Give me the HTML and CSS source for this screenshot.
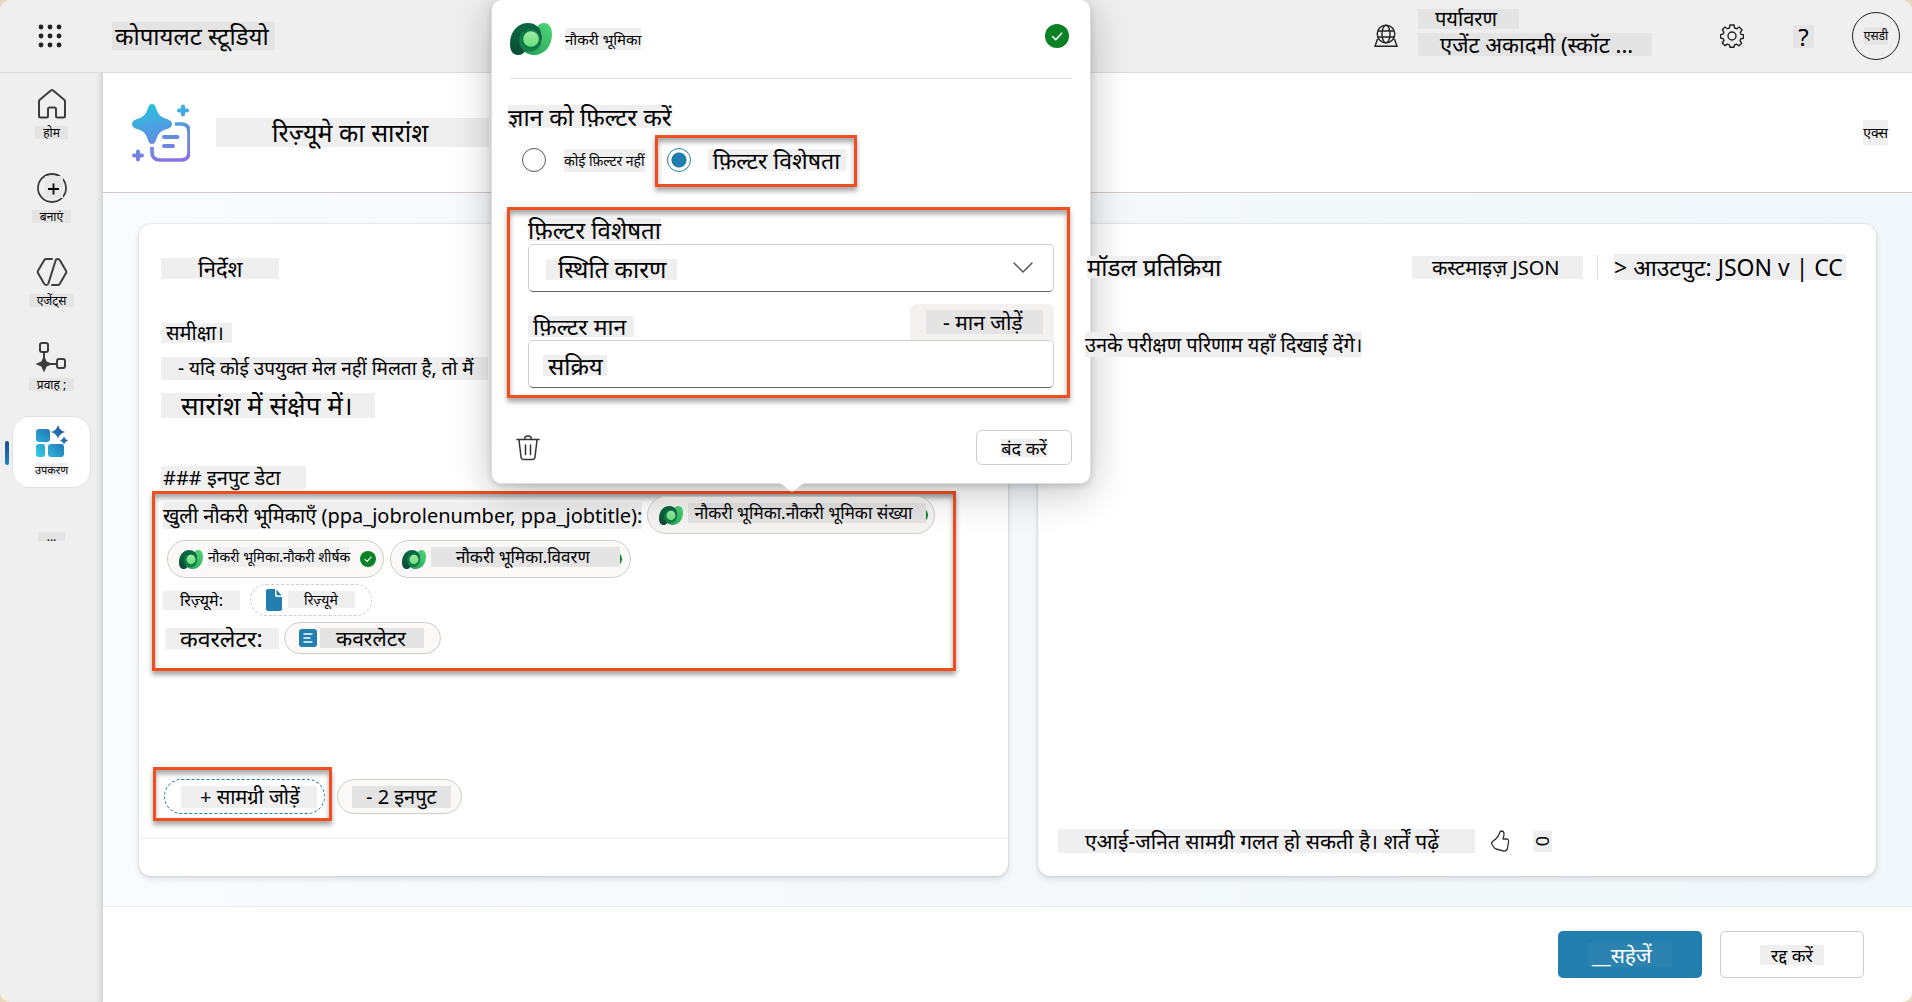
FILE: index.html
```html
<!DOCTYPE html>
<html lang="hi">
<head>
<meta charset="utf-8">
<title>कोपायलट स्टूडियो</title>
<meta name="viewport" content="width=device-width, initial-scale=1">
<link rel="stylesheet" href="styles.css">
</head>
<body>
<svg class="defs" width="0" height="0" aria-hidden="true">
  <defs>
    <linearGradient id="dvDark" x1="0" y1="0" x2="0" y2="1"><stop offset="0" stop-color="#0b6b43"/><stop offset="1" stop-color="#0a4a33"/></linearGradient>
    <linearGradient id="dvLight" x1="1" y1="0" x2="0" y2="1"><stop offset="0" stop-color="#4fd876"/><stop offset="1" stop-color="#1f9a54"/></linearGradient>
    <linearGradient id="dvCore" x1="0" y1="0" x2="0" y2="1"><stop offset="0" stop-color="#9ce8a3"/><stop offset="1" stop-color="#6be37c"/></linearGradient>
    <symbol id="dataverse" viewBox="0 0 42 32" preserveAspectRatio="none">
      <path d="M24 32C34 32 42 24 42 11c0-7-3-11-8-11-3 0-5 1-7 4 4 3 6 8 5 13-1 6-6 9-11 9-5 0-9-3-10-8-1 9 5 14 13 14z" fill="url(#dvLight)"/>
      <path d="M18 0C8 0 0 8 0 21c0 7 3 11 8 11 3 0 5-1 7-4L21 16l11 1C33 7 27 0 18 0z" fill="url(#dvDark)"/>
      <path d="M12 9C8 15 8 22 14 28c9 3 18-2 18-13z" fill="#14804a"/>
      <circle cx="21" cy="16" r="10" fill="#107845"/>
      <circle cx="21" cy="16" r="7.800" fill="url(#dvCore)"/>
    </symbol>
    <symbol id="check" viewBox="0 0 24 24">
      <circle cx="12" cy="12" r="12" fill="#0b8126"/>
      <path d="M7.500 12.500l3.200 3.200 6-6.500" fill="none" stroke="#fff" stroke-width="1.600" stroke-linecap="round" stroke-linejoin="round"/>
    </symbol>
    <linearGradient id="toolG" gradientUnits="userSpaceOnUse" x1="0" y1="32" x2="28" y2="2"><stop offset="0" stop-color="#33cfe2"/><stop offset=".6" stop-color="#2585c0"/><stop offset="1" stop-color="#24509e"/></linearGradient>
    <linearGradient id="promptG" gradientUnits="userSpaceOnUse" x1="20" y1="0" x2="34" y2="58"><stop offset="0" stop-color="#2bc0dc"/><stop offset=".5" stop-color="#5597e2"/><stop offset="1" stop-color="#8a72e8"/></linearGradient>
  </defs>
</svg>

<div class="app">
  <header class="topbar">
    <button class="icon-btn waffle" aria-label="ऐप लॉन्चर">
      <svg width="24" height="24" viewBox="0 0 24 24" fill="#222"><circle cx="3" cy="3" r="2.400"/><circle cx="12" cy="3" r="2.400"/><circle cx="21" cy="3" r="2.400"/><circle cx="3" cy="12" r="2.400"/><circle cx="12" cy="12" r="2.400"/><circle cx="21" cy="12" r="2.400"/><circle cx="3" cy="21" r="2.400"/><circle cx="12" cy="21" r="2.400"/><circle cx="21" cy="21" r="2.400"/></svg>
    </button>
    <a class="brand tag dark" href="#">कोपायलट स्टूडियो</a>
    <div class="env">
      <svg width="24" height="24" viewBox="0 0 24 24" fill="none" stroke="#222" stroke-width="1.400"><circle cx="12" cy="10" r="8.800"/><ellipse cx="12" cy="10" rx="4" ry="8.800"/><path d="M4 7h16M4 13h16M3.500 15L1 22.300h22L20.500 15"/></svg>
      <div class="env-text">
        <span class="env-label tag dark">पर्यावरण</span>
        <span class="env-name tag dark">एजेंट अकादमी (स्कॉट ...</span>
      </div>
    </div>
    <button class="icon-btn gear" aria-label="सेटिंग">
      <svg width="24" height="24" viewBox="0 0 24 24" fill="none" stroke="#222" stroke-width="1.400" stroke-linejoin="round"><path d="M10 1h4l.6 3 2 .9L19.200 3 22 5.800l-1.700 2.600.8 2 2.400.4v3.400l-2.700.6-.8 1.900 1.600 2.500-2.600 2.600-2.500-1.600-2 .8L14 23.200h-4l-.6-2.300-2-.8L5 21.700 2.300 19l1.600-2.500-.8-1.900-2.600-.6v-3.400l2.500-.5.9-2L2.300 5.800 5 3l2.400 1.700L9.400 4z"/><circle cx="12" cy="12" r="4"/></svg>
    </button>
    <button class="icon-btn help tag dark">?</button>
    <button class="avatar"><span class="tag dark">एसडी</span></button>
  </header>

  <div class="body">
    <nav class="rail">
      <a class="rail-item" href="#">
        <svg width="32" height="32" viewBox="0 0 32 32" fill="none" stroke="#3d3d3d" stroke-width="2" stroke-linejoin="round"><path d="M14.800 2.600L3.800 11.800Q3 12.500 3 13.500V28q0 1.500 1.500 1.500h6Q12 29.500 12 28v-7q0-1.500 1.500-1.500h5Q20 19.500 20 21v7q0 1.500 1.500 1.500h6q1.500 0 1.500-1.500V13.500q0-1-.8-1.700L17.200 2.600q-1.200-1-2.400 0z"/></svg>
        <span class="tag dark">होम</span>
      </a>
      <a class="rail-item" href="#">
        <svg width="32" height="32" viewBox="0 0 32 32" fill="none" stroke="#3d3d3d" stroke-width="1.800"><circle cx="16" cy="16" r="14"/><rect x="9" y="4" width="18" height="22" fill="#e6e6e6" stroke="none"/><path d="M17.500 11.500v11M12 17h11" stroke="#000"/></svg>
        <span class="tag dark">बनाएं</span>
      </a>
      <a class="rail-item" href="#">
        <svg width="32" height="32" viewBox="0 0 32 32" fill="none" stroke="#3d3d3d" stroke-width="2" stroke-linejoin="round" stroke-linecap="round"><path d="M16 3H10.500Q9 3 8.300 4L2 14.700q-.7 1.200 0 2.400L8 27.500q.6 1.500 2.200 1.500 1.600 0 2.200-1.500L19.600 4.500Q20 3 21.600 3q1.600 0 2.400 1.500L30 14.700q.7 1.200 0 2.400L23.700 28q-.6 1-2 1H16"/></svg>
        <span class="tag dark">एजेंट्स</span>
      </a>
      <a class="rail-item" href="#">
        <svg width="32" height="32" viewBox="0 0 32 32" fill="none" stroke="#3d3d3d" stroke-width="2"><rect x="4" y="3" width="8" height="9" rx="2"/><rect x="21" y="19" width="8" height="9" rx="2"/><path d="M8 12v6M14 24h7"/><path d="M8 18l1.800 4.200L14 24l-4.200 1.800L8 30l-1.800-4.200L2 24l4.200-1.800z" fill="#3d3d3d"/></svg>
        <span class="tag dark">प्रवाह ;</span>
      </a>
      <a class="rail-item active" href="#">
        <svg width="32" height="32" viewBox="0 0 32 32" fill="url(#toolG)"><rect x="0" y="4" width="14" height="13" rx="3"/><rect x="0" y="19" width="9" height="13" rx="3"/><rect x="12" y="19" width="16" height="13" rx="3"/><path d="M22 0q1.500 5.500 7 7-5.500 1.500-7 7-1.500-5.500-7-7 5.500-1.500 7-7zM28 11.500q1 3 4 4-3 1-4 4-1-3-4-4 3-1 4-4z"/></svg>
        <span class="tag">उपकरण</span>
      </a>
      <a class="rail-item more" href="#"><span class="tag dark">...</span></a>
    </nav>

    <main class="main">
      <section class="titlebar">
        <svg width="58" height="58" viewBox="0 0 58 58" fill="url(#promptG)"><path d="M20 0q3 0 4 4c2 6 4 9 11 11q5 1.500 5 5t-5 5c-7 2-9 5-11 11q-1 4-4 4t-4-4c-2-6-4-9-11-11q-5-1.500-5-5t5-5c7-2 9-5 11-11q1-4 4-4z"/><path d="M43 20h6q8 0 8 8v20q0 8-8 8H28q-8 0-8-8v-5" fill="none" stroke="url(#promptG)" stroke-width="3.600"/><path d="M32 33h13.500M32 42h9" fill="none" stroke="url(#promptG)" stroke-width="4" stroke-linecap="round"/><path d="M51 2.500v8M47 6.500h8M6 47.500v8M2 51.500h8" stroke="url(#promptG)" stroke-width="4" stroke-linecap="round"/></svg>
        <h1 class="tag">रिज़्यूमे का सारांश</h1>
        <button class="close tag">एक्स</button>
      </section>

      <section class="workspace">
        <article class="card prompt">
          <div class="prompt-body">
            <h2 class="tag">निर्देश</h2>
            <p class="line-a tag">समीक्षा।</p>
            <p class="line-b tag">- यदि कोई उपयुक्त मेल नहीं मिलता है, तो मैं</p>
            <p class="line-c tag">सारांश में संक्षेप में।</p>
            <p class="line-d tag">### इनपुट डेटा</p>
            <div class="inputs marked">
              <div class="row">
                <span class="roles tag">खुली नौकरी भूमिकाएँ (ppa_jobrolenumber, ppa_jobtitle):</span>
                <button class="chip c1"><svg class="dv"><use href="#dataverse"/></svg><span class="tag dark">नौकरी भूमिका.नौकरी भूमिका संख्या</span><svg class="sliver" viewBox="14 0 2 16"><circle cx="8" cy="8" r="8" fill="#0b8126"/></svg></button>
              </div>
              <div class="row second">
                <button class="chip c2"><svg class="dv"><use href="#dataverse"/></svg><span class="tag">नौकरी भूमिका.नौकरी शीर्षक</span><svg class="ok"><use href="#check"/></svg></button>
                <button class="chip c3"><svg class="dv"><use href="#dataverse"/></svg><span class="tag dark">नौकरी भूमिका.विवरण</span><svg class="sliver" viewBox="14 0 2 16"><circle cx="8" cy="8" r="8" fill="#0b8126"/></svg></button>
              </div>
              <div class="row third">
                <span class="resume tag">रिज़्यूमे:</span>
                <button class="chip c4"><svg width="16" height="22" viewBox="0 0 16 22" fill="#217ead"><path d="M2 0h7v6q0 2 2 2h5v12q0 2-2 2H2q-2 0-2-2V2q0-2 2-2z"/><path d="M10.500.5L15.500 6.500H12q-1.500 0-1.500-1.500z"/></svg><span class="tag">रिज़्यूमे</span></button>
              </div>
              <div class="row fourth">
                <span class="cover tag">कवरलेटर:</span>
                <button class="chip c5"><svg width="18" height="18" viewBox="0 0 18 18"><rect width="18" height="18" rx="3" fill="#217ead"/><path d="M5 5h8M5 9h6M5 13h8" stroke="#fff" stroke-width="1.300" stroke-linecap="round"/></svg><span class="tag dark">कवरलेटर</span></button>
              </div>
            </div>
          </div>
          <div class="actions">
            <div class="marked add-mark"><button class="pill add"><span class="tag">+ सामग्री जोड़ें</span></button></div>
            <button class="pill count"><span class="tag dark">- 2 इनपुट</span></button>
          </div>
          <div class="card-foot"></div>
        </article>

        <article class="card response">
          <div class="response-head">
            <h2 class="tag">मॉडल प्रतिक्रिया</h2>
            <button class="custom tag">कस्टमाइज़ JSON</button>
            <span class="rule"></span>
            <button class="output tag">&gt; आउटपुट: JSON v | CC</button>
          </div>
          <p class="hint tag">उनके परीक्षण परिणाम यहाँ दिखाई देंगे।</p>
          <div class="response-foot">
            <p class="terms tag">एआई-जनित सामग्री गलत हो सकती है। शर्तें पढ़ें</p>
            <button class="icon-btn" aria-label="पसंद"><svg width="20" height="24" viewBox="0 0 20 24" fill="none" stroke="#333" stroke-width="1.300" stroke-linejoin="round"><path d="M11.500 2q2.500 0 2.500 3 0 2-1 5h3.500q2.500 0 2 3l-1 6.500q-.8 3-4 2.500L6 20q-1.500-.5-2.300-2L2 15.500q-1-2 .8-3.200 5-3 6.700-8.300.6-2 2-2z"/></svg></button>
            <button class="dislike tag">0</button>
          </div>
        </article>
      </section>

      <footer class="footer">
        <button class="save"><span class="tag">__सहेजें</span></button>
        <button class="cancel"><span class="tag">रद्द करें</span></button>
      </footer>
    </main>
  </div>
</div>

<section class="popup" role="dialog" aria-label="नौकरी भूमिका">
  <header class="popup-head">
    <svg class="logo"><use href="#dataverse"/></svg>
    <span class="name tag">नौकरी भूमिका</span>
    <svg class="status"><use href="#check"/></svg>
  </header>
  <fieldset class="choice">
    <legend class="tag">ज्ञान को फ़िल्टर करें</legend>
    <div class="radios">
      <label class="no-filter"><input type="radio" name="f"><span class="tag">कोई फ़िल्टर नहीं</span></label>
      <label class="by-attr marked"><input type="radio" name="f" checked><span class="tag">फ़िल्टर विशेषता</span></label>
    </div>
  </fieldset>
  <div class="filter marked">
    <label class="f1 tag" for="attr">फ़िल्टर विशेषता</label>
    <div class="select-wrap">
      <select id="attr"><option>स्थिति कारण</option></select>
      <svg width="20" height="12" viewBox="0 0 20 12" fill="none" stroke="#555" stroke-width="1.500" stroke-linecap="round" stroke-linejoin="round"><path d="M1 1l9 9 9-9"/></svg>
    </div>
    <div class="value-head">
      <label class="f2 tag" for="val">फ़िल्टर मान</label>
      <button class="add-value"><span class="tag dark">- मान जोड़ें</span></button>
    </div>
    <input id="val" type="text" value="सक्रिय">
  </div>
  <div class="popup-foot">
    <button class="icon-btn" aria-label="हटाएँ"><svg width="24" height="26" viewBox="0 0 24 26" fill="none" stroke="#333" stroke-width="1.500" stroke-linecap="round"><path d="M1 4.500h22M8.500 4.500Q8.500 1 12 1t3.500 3.500M3 5l2 17q.3 2.500 2.800 2.500h8.400q2.500 0 2.800-2.500L21 5M9.500 10v9.500M14.500 10v9.500"/></svg></button>
    <button class="dismiss"><span class="tag">बंद करें</span></button>
  </div>
</section>
</body>
</html>
```
FILE: styles.css
```css
* { box-sizing: border-box; }
html { height: 100%; background: #e6dcbc; }
body {
  margin: 0;
  min-height: 100%;
  color: #000;
  font: 20px/24px "Noto Sans", "Noto Sans Devanagari", sans-serif;
}
h1, h2, p, fieldset, legend { margin: 0; padding: 0; border: 0; font-weight: 400; }
a { color: inherit; text-decoration: none; }
svg { display: block; flex: none; }
.defs { position: absolute; }
button, input, select { font: inherit; color: inherit; margin: 0; }
button { padding: 0; border: 0; background: none; cursor: pointer; }

/* shaded text run */
.tag { display: block; background: #efefef; white-space: nowrap; flex: none; text-align: left; }
.tag.dark { background: #e4e4e4; }

/* orange callout frame */
.marked {
  border: 3px solid #f04e1e;
  box-shadow: 0 4px 5px rgba(0, 0, 0, .35), inset 0 4px 5px rgba(0, 0, 0, .35);
}

.app { display: flex; flex-direction: column; min-height: 100vh; background: #efefef; border-radius: 10px; overflow: hidden; }

.topbar { display: flex; align-items: center; height: 73px; padding: 0 12px 0 38px; border-bottom: 1px solid #dcdcdc; }
.brand { margin-left: 50px; padding: 0 6px 0 3px; font-size: 24px; line-height: 28px; }
.env { display: flex; align-items: center; gap: 20px; margin-left: auto; }
.env-text { display: flex; flex-direction: column; gap: 4px; width: 234px; padding-bottom: 7px; }
.env-label { width: 101px; padding-left: 17px; line-height: 20px; }
.env-name { padding-left: 22px; font-size: 22px; line-height: 23px; }
.gear { margin-left: 68px; }
.help.tag { margin-left: 49px; width: 21px; font-size: 24px; line-height: 23px; text-align: center; }
.avatar { display: grid; place-items: center; width: 48px; height: 48px; margin-left: 38px; border: 1px solid #222; border-radius: 50%; }
.avatar .tag { font-size: 12px; line-height: 18px; }

.body { display: flex; flex: 1; }
.rail { display: flex; flex-direction: column; align-items: center; gap: 6px; width: 103px; padding: 7px 0 0; box-shadow: inset -6px 0 6px -4px rgba(0, 0, 0, .15); }
.rail-item { display: flex; flex-direction: column; align-items: center; gap: 6px; width: 79px; height: 78px; padding-top: 8px; border-radius: 18px; font-size: 12px; line-height: 13px; }
.rail-item .tag { padding: 0 8px; }
.rail-item.active { position: relative; height: 72px; background: #fff; border: 1px solid #e2e2e2; }
.rail-item.active .tag { padding: 0; font-size: 11px; }
.rail-item.active::before { content: ""; position: absolute; left: -8px; top: 24px; width: 4px; height: 24px; border-radius: 2px; background: linear-gradient(#1c4a94, #2283bd); }
.rail-item.more { height: 60px; padding-top: 38px; }
.rail-item.more .tag { padding: 0 9px; line-height: 9px; }

.main { display: flex; flex-direction: column; flex: 1; min-width: 0; background: #fff; }
.titlebar { display: flex; align-items: center; height: 120px; padding: 0 24px 0 29px; border-bottom: 1px solid #cfcac7; }
.titlebar h1 { margin-left: 26px; width: 273px; padding-left: 56px; font-size: 25px; line-height: 29px; }
.close.tag { margin-left: auto; font-size: 14px; line-height: 25px; }

.workspace { display: flex; flex: 1; gap: 30px; padding: 31px 36px 30px; background: linear-gradient(90deg, #f9fbfe, #f1f7fa); }
.card { display: flex; flex-direction: column; min-width: 0; background: #fff; border-radius: 12px; box-shadow: 0 0 2px rgba(0, 0, 0, .2), 0 3px 6px rgba(0, 0, 0, .12); }
.prompt { flex: 869 1 0; }
.response { flex: 838 1 0; }

.prompt-body { display: flex; flex-direction: column; align-items: flex-start; flex: 1; padding: 34px 13px 0; }
.prompt-body > .tag { margin-left: 9px; }
.prompt h2 { width: 118px; padding-left: 37px; font-size: 22px; line-height: 21px; }
.line-a { margin-top: 44px; padding: 0 8px 0 5px; line-height: 20px; }
.line-b { margin-top: 14px; padding: 0 14px 0 17px; font-size: 19px; line-height: 23px; }
.line-c { margin-top: 13px; padding: 0 22px 0 20px; font-size: 26px; line-height: 25px; }
.line-d { margin-top: 48px; padding: 0 26px 0 2px; line-height: 23px; }
.inputs { width: 804px; height: 180px; margin-top: 2px; padding: 2px 8px 0; }
.row { display: flex; align-items: center; gap: 5px; }
.row.second { margin-top: 6px; padding-left: 4px; gap: 6px; }
.row.third { margin-top: 6px; gap: 10px; }
.row.fourth { margin-top: 6px; padding-left: 2px; }
.roles { line-height: 27px; }
.resume { width: 77px; padding-left: 17px; font-size: 16px; line-height: 19px; }
.cover { width: 114px; padding-left: 15px; font-size: 23px; line-height: 21px; }

.chip { display: flex; align-items: center; height: 38px; border: 1px solid #cfcdcb; border-radius: 19px; background: #faf9f8; font-size: 17px; line-height: 20px; }
.chip .dv { width: 24px; height: 19px; margin-right: 5px; }
.chip .ok { width: 16px; height: 16px; margin-left: 11px; }
.chip .tag { margin-bottom: 4px; }
.sliver { width: 2px; height: 16px; }
.c1 { width: 288px; padding-left: 11px; background: #f5f4f3; }
.c1 .tag { width: 238px; padding-left: 6px; }
.c2 { width: 217px; padding-left: 11px; }
.c2 .tag { width: 141px; font-size: 14px; }
.c3 { width: 241px; padding-left: 11px; }
.c3 .tag { width: 189px; padding-left: 25px; }
.c4 { width: 122px; height: 32px; padding-left: 15px; gap: 6px; border-style: dashed; background: #fff; font-size: 14px; line-height: 17px; }
.c4 .tag { width: 67px; padding-left: 16px; margin-bottom: 2px; }
.c5 { width: 157px; height: 32px; padding-left: 14px; gap: 3px; font-size: 21px; }
.c5 .tag { width: 104px; padding-left: 16px; margin: 0; }

.actions { display: flex; align-items: flex-end; gap: 5px; padding: 0 14px 17px; }
.add-mark { padding: 9px 4px 4px 8px; }
.pill { display: flex; align-items: center; height: 35px; border: 1px solid #cfcdcb; border-radius: 18px; background: #faf9f8; line-height: 22px; }
.add { width: 161px; padding-left: 16px; border: 1px dashed #217ead; background: #fff; }
.add .tag { width: 136px; padding-left: 19px; }
.count { width: 125px; margin-bottom: 7px; padding-left: 14px; }
.count .tag { width: 99px; padding-left: 14px; }
.card-foot { height: 38px; border-top: 1px solid #ededed; }

.response-head { display: flex; align-items: center; padding: 30px 30px 0 49px; }
.response h2, .hint { position: relative; z-index: 3; }
.response h2 { font-size: 24px; line-height: 22px; margin-right: auto; }
.custom.tag { width: 171px; padding-left: 20px; line-height: 23px; }
.rule { width: 1px; height: 24px; margin: 0 16px 0 14px; background: #dcdcdc; }
.output.tag { width: 232px; font-size: 23px; line-height: 26px; }
.hint { align-self: flex-start; margin: 52px 0 0 47px; line-height: 25px; }
.response-foot { display: flex; align-items: center; margin-top: auto; padding: 0 20px 23px; }
.terms { width: 417px; padding-left: 27px; font-size: 21px; line-height: 24px; margin-right: 15px; }
.dislike.tag { width: 19px; height: 21px; margin-left: 23px; font-size: 18px; line-height: 19px; writing-mode: vertical-rl; text-align: center; }

.footer { display: flex; justify-content: flex-end; align-items: flex-start; gap: 18px; height: 96px; padding: 24px 48px 0; border-top: 1px solid #ececec; }
.footer button { display: grid; place-items: center; width: 144px; height: 47px; border-radius: 5px; }
.save { background: #217ead; color: #fff; font-size: 21px; }
.save .tag { width: 84px; padding-left: 4px; background: #2d83b0; }
.cancel { border: 1px solid #cdcdcd; background: #fff; font-size: 18px; line-height: 20px; }
.cancel .tag { padding: 0 11px; }

/* filter dialog anchored over the prompt card */
.popup { position: absolute; z-index: 2; left: 491px; top: 0; width: 600px; height: 484px; padding: 0 18px 0 16px; background: #fff; border: 1px solid #dedede; border-top: 0; border-radius: 10px; box-shadow: 0 8px 40px rgba(0, 0, 0, .24), 0 2px 6px rgba(0, 0, 0, .15); }
.popup::after { content: ""; position: absolute; left: 288px; top: 483px; border: 12px solid transparent; border-top: 9px solid #fff; border-bottom: 0; }
.popup-head { display: flex; align-items: center; height: 79px; margin-left: 2px; border-bottom: 1px solid #dedede; }
.logo { width: 42px; height: 32px; }
.name { margin-left: 13px; font-size: 15px; line-height: 22px; }
.status { width: 24px; height: 24px; margin: 0 3px 6px auto; }
.choice { padding-top: 26px; }
.choice legend { float: left; font-size: 24px; line-height: 23px; }
.radios { clear: both; display: flex; align-items: flex-start; padding: 7px 0 0 14px; }
.radios label { display: flex; align-items: center; }
.radios input { appearance: none; width: 24px; height: 24px; border: 1px solid #555; border-radius: 50%; background: #fff; }
.radios input:checked { border-color: #217ead; background: radial-gradient(circle, #217ead 7px, #fff 8px); }
.no-filter { padding-top: 13px; gap: 18px; font-size: 14px; line-height: 23px; }
.by-attr { width: 202px; height: 52px; margin-left: 10px; padding: 0 0 2px 9px; gap: 17px; font-size: 23px; line-height: 22px; }
.by-attr .tag { width: 138px; padding-left: 5px; }
.filter { display: flex; flex-direction: column; align-items: stretch; width: 563px; height: 191px; margin: 20px 0 0 -1px; padding: 8px 13px 0 18px; }
.f1 { align-self: flex-start; font-size: 24px; line-height: 23px; }
.select-wrap { display: grid; align-items: center; margin-top: 3px; }
.select-wrap > * { grid-area: 1 / 1; }
.select-wrap svg { justify-self: end; margin-right: 21px; pointer-events: none; }
.filter select, .filter input { appearance: none; width: 100%; height: 48px; border: 1px solid #cfcfcf; border-bottom-color: #616161; border-radius: 5px; font-size: 24px; line-height: 30px; }
.filter select { padding: 2px 0 0 29px; background: linear-gradient(#efefef, #efefef) 17px 14px / 131px 21px no-repeat #fff; }
.filter input { padding: 2px 0 0 19px; background: linear-gradient(#efefef, #efefef) 14px 14px / 64px 21px no-repeat #fff; }
.value-head { display: flex; justify-content: space-between; align-items: flex-end; margin-top: 12px; }
.f2 { margin-bottom: 3px; padding: 0 8px 0 5px; font-size: 23px; line-height: 21px; }
.add-value { display: flex; align-items: center; width: 144px; height: 36px; padding-left: 16px; background: #f3f2f1; border-radius: 6px 6px 0 0; font-size: 21px; }
.add-value .tag { width: 117px; padding-left: 17px; }
.popup-foot { display: flex; justify-content: space-between; align-items: center; margin-top: 32px; padding-left: 8px; }
.dismiss { display: grid; place-items: center; width: 96px; height: 35px; border: 1px solid #cfcfcf; border-radius: 6px; font-size: 18px; line-height: 18px; }
```
